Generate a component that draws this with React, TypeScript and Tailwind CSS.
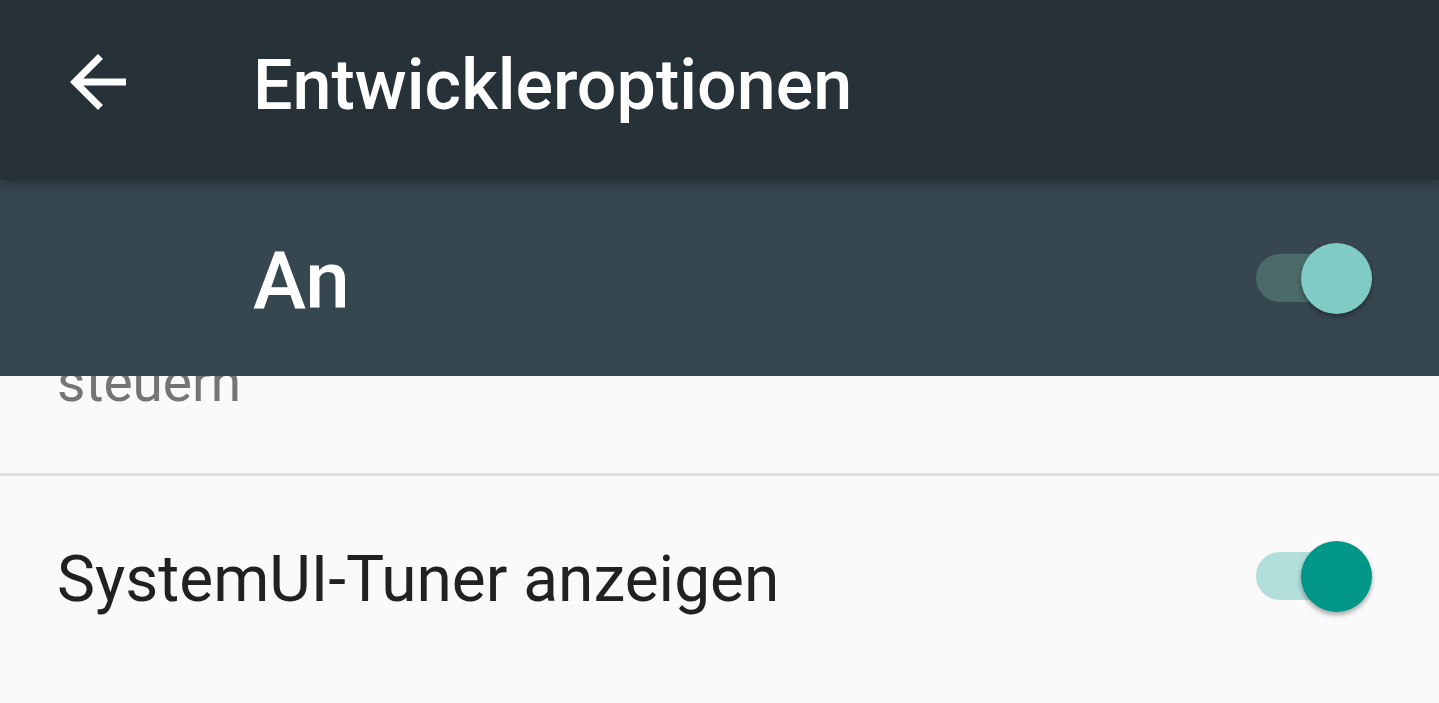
import React, { useState } from 'react';

const Toggle: React.FC<{ on: boolean; dark?: boolean; onClick: () => void }> = ({ on, dark, onClick }) => {
    const track = dark ? 'bg-[#4b6b6b]' : 'bg-[#b2dfdb]';
    const thumb = dark ? 'bg-[#80cbc4]' : 'bg-[#009688]';
    return (
        <button type="button" onClick={onClick} className="relative w-[116px] h-[71px] shrink-0">
            <span className={`absolute left-0 top-[11px] w-[112px] h-[48px] rounded-full ${on ? track : 'bg-[#9e9e9e]'}`} />
            <span
                className={`absolute top-0 w-[71px] h-[71px] rounded-full shadow-[0_3px_5px_rgba(0,0,0,0.35)] ${on ? 'right-0 ' + thumb : 'left-0 bg-[#f1f1f1]'}`}
            />
        </button>
    );
};

const App: React.FC = () => {
    const [devOn, setDevOn] = useState(true);
    const [tuner, setTuner] = useState(true);

    return (
        <div className="w-[1439px] h-[703px] overflow-hidden bg-[#fafafa] font-['Roboto',sans-serif]">
            {/* toolbar */}
            <div className="relative z-10 h-[180px] bg-[#263238] flex items-center shadow-[0_4px_10px_rgba(0,0,0,0.3)]">
                <div className="w-[84px] h-[84px] ml-[56px] -mt-[16px] shrink-0">
                    <svg viewBox="0 0 24 24" width="84" height="84" fill="#ffffff">
                        <path d="M20 11H7.83l5.59-5.59L12 4l-8 8 8 8 1.41-1.41L7.83 13H20v-2z" />
                    </svg>
                </div>
                <h1 className="ml-[113px] -mt-[10px] text-white text-[70px] font-medium leading-none">
                    Entwickleroptionen
                </h1>
            </div>

            {/* master switch bar */}
            <div className="relative z-[5] h-[196px] bg-[#37474f] flex items-center justify-between pr-[67px]">
                <span className="ml-[253px] text-white text-[80px] font-medium leading-none mt-[6px]">An</span>
                <Toggle on={devOn} dark onClick={() => setDevOn(!devOn)} />
            </div>

            {/* list, scrolled */}
            <div className="h-[97px] overflow-hidden">
                <p className="ml-[57px] -mt-[21px] text-[55px] leading-none text-[#757575]">steuern</p>
            </div>
            <div className="h-[3px] bg-[#e0e0e0]" />
            <div className="h-[200px] flex items-center justify-between pr-[67px]">
                <span className="ml-[57px] mt-[8px] text-[64px] leading-none text-[#212121]">SystemUI-Tuner anzeigen</span>
                <Toggle on={tuner} onClick={() => setTuner(!tuner)} />
            </div>
        </div>
    );
};

export default App;
